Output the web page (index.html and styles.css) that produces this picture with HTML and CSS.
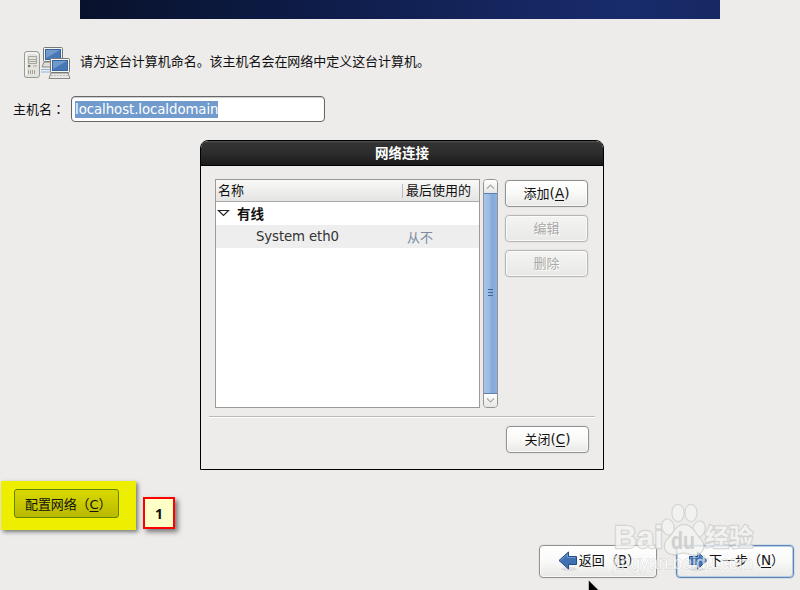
FILE: index.html
```
<!DOCTYPE html>
<html lang="zh-CN">
<head>
<meta charset="utf-8">
<title>网络连接</title>
<link rel="stylesheet" href="styles.css">
</head>
<body>
<div class="screen">
  <div class="banner"></div>
  <div class="intro">
    <svg class="computers" width="48" height="34" viewBox="0 0 48 34">
      <path d="M18 23.500h10M18 26h10" stroke="#8db4e3" stroke-width="1.200"/>
      <path d="M1.500 30V7.500Q1.500 5.500 4 5.500H13Q15.500 5.500 16.500 8V29Q16.500 31.500 14 31.500H4Q1.500 31.500 1.500 30Z" fill="#e4e4df" stroke="#999b95"/>
      <path d="M3 29V8Q3 7 5 7H12Q15 7 15 9" fill="none" stroke="#fff"/>
      <path d="M5.500 10.500h8v7h-8zM6 13.500h7M6 15.500h7M5 20h3M10 20h4" fill="none" stroke="#a6a7a1"/>
      <circle cx="6" cy="20" r="1.200" fill="#777972"/>
      <path d="M5.500 24v4M7.500 24v4M9.500 24v4M11.500 24v4" stroke="#a3a49e"/>
      <path d="M21 16h18l2 5H19z" fill="#ddded9" stroke="#888a85"/>
      <rect x="20.500" y="1.500" width="19" height="14" rx="1" fill="#f2f2ef" stroke="#777974"/>
      <rect x="22.500" y="3.500" width="15" height="10" fill="#4778b5" stroke="#3465a4"/>
      <path d="M23 4h14L23 12z" fill="#7199cb"/>
      <path d="M28 27h17l2 5.500H26z" fill="#e7e7e3" stroke="#888a85"/>
      <path d="M28 29.500h17" stroke="#bbb" stroke-dasharray="2 1"/>
      <rect x="27.500" y="12.500" width="19" height="14" rx="1" fill="#f5f5f2" stroke="#777974"/>
      <rect x="29.500" y="14.500" width="15" height="10" fill="#4778b5" stroke="#3465a4"/>
      <path d="M30 15h14L30 23z" fill="#7199cb"/>
    </svg>
    <p>请为这台计算机命名。该主机名会在网络中定义这台计算机。</p>
  </div>
  <div class="host">
    <span class="host-label">主机名<span class="colon" lang="zh-TW">：</span></span>
    <div class="field"><span class="selected">localhost.localdomain</span></div>
  </div>
  <div class="nav">
    <div class="btn nav-btn">
      <svg class="arrow" width="20" height="22" viewBox="0 0 20 22">
        <ellipse cx="11" cy="19" rx="8" ry="2" fill="#ddd"/>
        <path d="M1 10.500 10.500 2V6.500H18.500V14.500H10.500V19Z" fill="#3f70b1" stroke="#204a87"/>
        <path d="M2.500 10.500 9.500 4.300V7.500H17.500" fill="none" stroke="#709bce"/>
      </svg>
      <span>返回（<u>B</u>）</span>
    </div>
    <div class="btn nav-btn focus">
      <svg class="arrow" width="20" height="22" viewBox="0 0 20 22">
        <ellipse cx="9" cy="19" rx="8" ry="2" fill="#ddd"/>
        <path d="M19 10.500 9.500 2V6.500H1.500V14.500H9.500V19Z" fill="#3f70b1" stroke="#204a87"/>
        <path d="M17.500 10.500 10.500 4.300V7.500H2.500V13" fill="none" stroke="#709bce"/>
      </svg>
      <span>下一步（<u>N</u>）</span>
    </div>
  </div>

  <div class="highlight"><div class="config">配置网络（<u>C</u>）</div></div>
  <div class="callout">1</div>

  <div class="dialog">
    <div class="titlebar">网络连接</div>
    <div class="content">
      <div class="main">
        <div class="list">
          <div class="list-head"><span class="col-name">名称</span><span class="col-used">最后使用的</span></div>
          <div class="row group">
            <svg width="13" height="8" viewBox="0 0 13 8"><path d="M1.500 1.500H11.500L6.500 6.500Z" fill="#fff" stroke="#222" stroke-width="1.200"/></svg>
            <span>有线</span>
          </div>
          <div class="row item"><span class="item-name">System eth0</span><span class="never">从不</span></div>
        </div>
        <div class="scrollbar">
          <div class="step"><svg width="9" height="5" viewBox="0 0 9 5"><path d="M1 4.500 4.500 1 8 4.500" fill="none" stroke="#aaa" stroke-width="1.200"/></svg></div>
          <div class="thumb"><svg width="5" height="7" viewBox="0 0 5 7"><path d="M0 .5h5M0 3.500h5M0 6.500h5" stroke="#3f6796"/></svg></div>
          <div class="step"><svg width="9" height="5" viewBox="0 0 9 5"><path d="M1 .5 4.500 4 8 .5" fill="none" stroke="#aaa" stroke-width="1.200"/></svg></div>
        </div>
        <div class="actions">
          <div class="btn">添加<span class="key">(<u>A</u>)</span></div>
          <div class="btn disabled">编辑</div>
          <div class="btn disabled">删除</div>
        </div>
      </div>
      <div class="footer"><div class="btn">关闭<span class="key">(<u>C</u>)</span></div></div>
    </div>
  </div>

  <svg class="watermark" width="190" height="90" viewBox="0 0 190 90">
    <g class="mark">
      <text class="brand" x="3" y="48" textLength="49" lengthAdjust="spacingAndGlyphs">Bai</text>
      <ellipse cx="57" cy="27" rx="5.500" ry="7.500" transform="rotate(-15 57 27)"/>
      <ellipse cx="67" cy="13" rx="5.500" ry="8"/>
      <ellipse cx="80" cy="13" rx="5.500" ry="8"/>
      <ellipse cx="88" cy="29" rx="5.500" ry="7.500" transform="rotate(15 88 29)"/>
      <path d="M73 25C82 25 84 35 90 40 96 48 89 57 80 54 74 52 71 52 65 54 54 55 51 46 57 39 63 34 65 25 73 25Z"/>
      <text class="cjk" x="94" y="46" textLength="48" lengthAdjust="spacingAndGlyphs">经验</text>
    </g>
    <text class="du" x="60" y="49" textLength="24" lengthAdjust="spacingAndGlyphs">du</text>
    <text class="url" x="2" y="69" textLength="140" lengthAdjust="spacingAndGlyphs">jingyan.baidu.com</text>
  </svg>
  <svg class="pointer" width="12" height="19" viewBox="0 0 12 19"><path d="M.5 0V19L12 11.500Z" fill="#000" stroke="#fff" stroke-width=".5"/></svg>
</div>
</body>
</html>
```

FILE: styles.css
```
* { box-sizing: border-box; }
body {
  margin: 0;
  font-family: "DejaVu Sans", "Noto Sans CJK SC", sans-serif;
  font-size: 13px;
  color: #111;
}
.screen {
  position: relative;
  width: 800px;
  height: 590px;
  overflow: hidden;
  background: #edeceb;
  display: flex;
  flex-direction: column;
}
.banner {
  height: 19px;
  margin: 0 80px;
  background: linear-gradient(90deg, #09122c 0, #0c1a43 30%, #14245a 60%, #182b6b 85%, #162963);
}
.intro { display: flex; gap: 10px; margin: 27px 0 0 23px; height: 34px; }
.intro p { margin: 6px 0 0 -1px; line-height: 20px; white-space: nowrap; letter-spacing: -.04px; }
.host { display: flex; align-items: center; height: 26px; margin: 16px 0 0 13px; }
.host-label { width: 58px; padding-top: 1px; line-height: 20px; white-space: nowrap; }
.colon { font-family: "Noto Sans CJK TC", sans-serif; }
.field {
  width: 254px;
  height: 26px;
  padding: 4px 3px;
  border: 1px solid #666;
  border-radius: 4px;
  background: #fff;
  box-shadow: inset 0 1px 1px #ccc;
}
.selected {
  display: block;
  width: 143px;
  height: 17px;
  line-height: 17px;
  font-size: 13.3px;
  letter-spacing: -.06px;
  color: #fff;
  background: #729bcd;
  white-space: nowrap;
}
.btn {
  display: flex;
  align-items: center;
  justify-content: center;
  width: 83px;
  height: 27px;
  padding-bottom: 2px;
  border: 1px solid #92928f;
  border-radius: 4px;
  background: linear-gradient(#fff, #f9f9f8 50%, #e8e8e6);
  box-shadow: inset 0 0 0 1px #ffffffaa, 0 0 0 1px #d9d8d666;
  white-space: nowrap;
}
.key { font-size: 13.5px; }
u { text-underline-offset: 2px; text-decoration-thickness: 1px; }
.disabled {
  color: #aaa9a6;
  border-color: #b8b7b4;
  background: linear-gradient(#f4f4f3, #e8e8e6);
  text-shadow: 1px 1px #fff;
}
.nav { display: flex; gap: 19px; margin: auto 6px 12px auto; }
.nav-btn { width: 118px; height: 33px; gap: 1px; padding: 0 0 2px 2px; }
.nav-btn span { margin-top: -2px; }
.nav-btn u { font-size: 13.5px; }
.focus { border-color: #6087b8; box-shadow: inset 0 0 0 1px #b7cbe3, 0 0 0 1px #b7cbe377; }
.arrow { flex: none; margin-top: 1px; }
.highlight {
  position: absolute;
  left: 1px;
  top: 481px;
  width: 135px;
  height: 49px;
  padding: 8px 13px;
  background: #eeee00;
  box-shadow: 2px 2px 4px #777;
}
.config {
  width: 105px;
  height: 29px;
  padding-left: 10px;
  border: 1px solid #62820a;
  border-radius: 3px;
  background: linear-gradient(#d9d900, #b9b900);
  line-height: 29px;
  letter-spacing: -.1px;
  white-space: nowrap;
}
.callout {
  position: absolute;
  left: 143px;
  top: 497px;
  width: 32px;
  height: 32px;
  border: 2px solid #f00;
  background: #ffffc8;
  box-shadow: 3px 3px 5px #777;
  font-family: "Noto Sans", sans-serif;
  font-weight: bold;
  font-size: 14px;
  line-height: 29px;
  text-align: center;
}
.dialog {
  position: absolute;
  left: 200px;
  top: 140px;
  width: 404px;
  height: 330px;
  border: 1px solid #000;
  border-radius: 8px 8px 0 0;
  background: #edeceb;
}
.titlebar {
  height: 25px;
  border-radius: 7px 7px 0 0;
  border-bottom: 1px solid #000;
  background: linear-gradient(#555 0, #333 2px, #2d2d2d 50%, #1b1b1b);
  color: #fff;
  font-weight: bold;
  font-size: 13.5px;
  line-height: 25px;
  text-align: center;
}
.content { padding: 13px 8px 0; }
.main { display: flex; padding-left: 6px; }
.list { width: 265px; height: 229px; border: 1px solid #9c9a97; background: #fff; }
.list-head {
  display: flex;
  height: 22px;
  border-bottom: 1px solid #aaa9a6;
  background: linear-gradient(#f9f9f8, #e4e4e2);
  line-height: 22px;
  padding-left: 2px;
}
.col-name { width: 184px; }
.col-used { height: 14px; margin-top: 4px; padding-left: 3px; border-left: 1px solid #bbb; line-height: 14px; white-space: nowrap; }
.row { display: flex; align-items: center; height: 23px; padding-bottom: 1px; }
.group { gap: 7px; padding-left: 1px; font-weight: bold; font-size: 13.5px; }
.item { background: #eee; color: #333; padding-left: 40px; }
.item-name { width: 151px; font-size: 13.3px; letter-spacing: -.12px; }
.never { color: #7b8a9c; }
.scrollbar {
  display: flex;
  flex-direction: column;
  width: 15px;
  height: 229px;
  margin-left: 3px;
  border: 1px solid #94938f;
  border-radius: 4px;
  overflow: hidden;
}
.step { display: flex; align-items: center; justify-content: center; height: 13px; background: linear-gradient(#fff, #e6e6e4); }
.thumb {
  flex: 1;
  display: flex;
  align-items: center;
  justify-content: center;
  margin: 0 -1px;
  padding-bottom: 2px;
  border: 1px solid #5b80b1;
  background: linear-gradient(90deg, #a9c6ea, #9bbbe4 40%, #84a9d9 60%, #8db1df);
}
.actions { display: flex; flex-direction: column; gap: 8px; margin: 1px 0 0 7px; }
.footer {
  display: flex;
  justify-content: flex-end;
  margin-top: 8px;
  padding: 9px 6px 0 0;
  border-top: 1px solid #bbbab7;
  box-shadow: inset 0 1px #fff;
}
.watermark { position: absolute; left: 611px; top: 500px; overflow: visible; }
.mark { fill: #f4f4f3; stroke: #cfcfcd; stroke-width: 2.4px; paint-order: stroke; opacity: .8; }
.brand { font: bold 31px "Liberation Sans", sans-serif; }
.cjk { font: bold 24px "Noto Sans CJK SC", sans-serif; }
.du { font: bold 23px "Liberation Sans", sans-serif; fill: #d0d0ce; }
.url { font: 19px "Liberation Sans", sans-serif; fill: #fff; stroke: #bbb; stroke-width: .8px; paint-order: stroke; opacity: .65; }
.pointer { position: absolute; left: 588px; top: 580px; }
```
